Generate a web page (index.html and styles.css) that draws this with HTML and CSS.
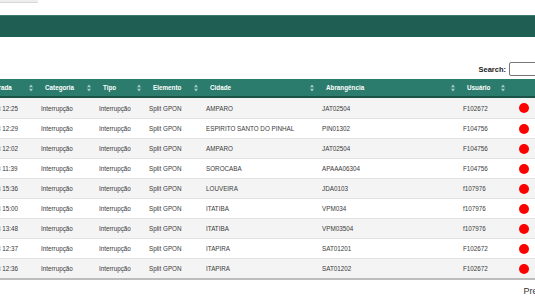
FILE: index.html
```html
<!DOCTYPE html>
<html lang="pt-BR">
<head>
    <meta charset="UTF-8">
    <title>Ocorrências</title>
    <link rel="stylesheet" href="styles.css">
</head>
<body>
    <div class="top-tab"></div>
    <div class="title-bar"></div>

    <div class="page">
        <div class="search-row">
            <label class="search-label">Search:</label>
            <input type="text" class="search-input">
        </div>

        <table class="grid">
            <colgroup>
                <col class="c-data"><col class="c-cat"><col class="c-tipo"><col class="c-elem">
                <col class="c-cid"><col class="c-abr"><col class="c-usr"><col class="c-st">
            </colgroup>
            <thead>
                <tr id="head"></tr>
            </thead>
            <tbody id="rows"></tbody>
        </table>

        <div class="pager">
            <span class="pager-btn">Previous</span>
            <span class="pager-btn">1</span>
            <span class="pager-btn">Next</span>
        </div>
    </div>

    <script>
        const sortIcon = '<svg class="sort" width="4" height="8" viewBox="0 0 4 8">' +
            '<polygon points="0,3.2 2,0.5 4,3.2"/><polygon points="0,4.8 2,7.5 4,4.8"/></svg>';

        const head = document.getElementById('head');
        ['Data Entrada', 'Categoria', 'Tipo', 'Elemento', 'Cidade', 'Abrangência', 'Usuário'].forEach(function (h) {
            head.innerHTML += '<th>' + h + sortIcon + '</th>';
        });
        head.innerHTML += '<th></th>';

        const rows = [
            ['02/10/2023 12:25', 'AMPARO', 'JAT02504', 'F102672'],
            ['02/10/2023 12:29', 'ESPIRITO SANTO DO PINHAL', 'PIN01302', 'F104756'],
            ['02/10/2023 12:02', 'AMPARO', 'JAT02504', 'F104756'],
            ['02/10/2023 11:39', 'SOROCABA', 'APAAA06304', 'F104756'],
            ['29/09/2023 15:36', 'LOUVEIRA', 'JDA0103', 'f107976'],
            ['29/09/2023 15:00', 'ITATIBA', 'VPM034', 'f107976'],
            ['29/09/2023 13:48', 'ITATIBA', 'VPM03504', 'f107976'],
            ['29/09/2023 12:37', 'ITAPIRA', 'SAT01201', 'F102672'],
            ['29/09/2023 12:36', 'ITAPIRA', 'SAT01202', 'F102672']
        ];

        const body = document.getElementById('rows');
        rows.forEach(function (r) {
            const tr = document.createElement('tr');
            tr.innerHTML =
                '<td>' + r[0] + '</td>' +
                '<td>Interrupção</td>' +
                '<td>Interrupção</td>' +
                '<td>Split GPON</td>' +
                '<td>' + r[1] + '</td>' +
                '<td>' + r[2] + '</td>' +
                '<td>' + r[3] + '</td>' +
                '<td><span class="status"></span></td>';
            body.appendChild(tr);
        });
    </script>
</body>
</html>
```

FILE: styles.css
```css
html, body {
    margin: 0;
    overflow: hidden;
}
body {
    font-family: 'Liberation Sans', Arial, sans-serif;
    color: #333;
    background: #fff;
}
.top-tab {
    width: 38px;
    height: 2px;
    background: #eeeeee;
    border-bottom: 1px solid #d8d8d8;
}
.title-bar {
    margin-top: 12px;
    height: 21px;
    background: #1f5e53;
    border-top: 1px solid #3a7a6e;
}
.page {
    margin-left: -36px;
    width: 636px;
}
.search-row {
    display: flex;
    justify-content: flex-end;
    align-items: center;
    gap: 3px;
    margin-top: 25px;
    height: 14px;
}
.search-label {
    font-size: 7.5px;
    font-weight: bold;
    color: #222;
}
.search-input {
    width: 91px;
    height: 14px;
    box-sizing: border-box;
    border: 1px solid #767676;
    border-radius: 2px;
    padding: 0;
    margin: 0;
}
.grid {
    margin-top: 3px;
    width: 100%;
    table-layout: fixed;
    border-collapse: collapse;
    font-size: 6.3px;
    border-bottom: 2px solid #bdbdbd;
}
.c-data { width: 72px; }
.c-cat { width: 58px; }
.c-tipo { width: 50px; }
.c-elem { width: 57px; }
.c-cid { width: 116px; }
.c-abr { width: 141px; }
.c-usr { width: 50px; }
.grid th {
    background: #2b7c6c;
    color: #fff;
    font-weight: bold;
    text-align: left;
    height: 17px;
    padding: 0 0 0 9px;
    border-bottom: 2px solid #1b5348;
    white-space: nowrap;
}
.sort {
    float: right;
    margin-right: 3px;
    fill: rgba(255, 255, 255, 0.6);
}
.grid td {
    height: 19px;
    padding: 0 0 0 5px;
    border-top: 1px solid #e2e2e2;
    white-space: nowrap;
    color: #3a3a3a;
}
.grid tbody tr:first-child td {
    border-top: none;
    height: 20px;
}
.grid tbody tr:nth-child(odd) td {
    background: #f4f4f4;
}
.status {
    display: block;
    width: 10px;
    height: 10px;
    margin-left: 6px;
    border-radius: 50%;
    background: #ff0000;
}
.pager {
    display: flex;
    justify-content: flex-end;
    gap: 4px;
    margin-top: 5px;
    font-size: 9px;
    color: #333;
}
.pager-btn {
    padding: 1px 2px;
}
```
